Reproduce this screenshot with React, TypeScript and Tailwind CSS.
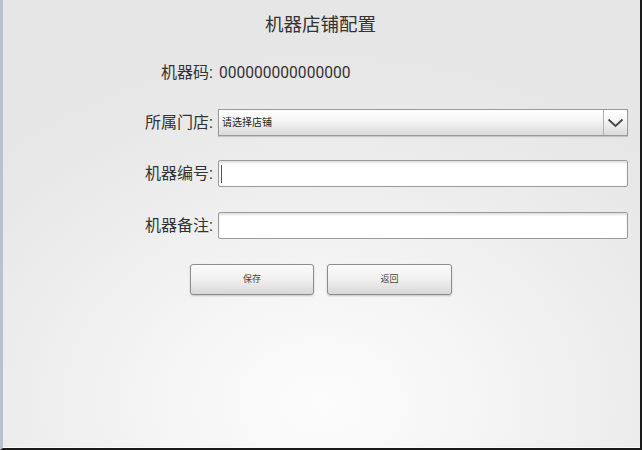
import React from "react";

const font = { fontFamily: 'Roboto, "Noto Sans CJK SC", sans-serif' };

function Label({ children }: { children: React.ReactNode }) {
  return (
    <div className="w-[214px] shrink-0 text-right text-[16px] leading-6 text-[#333] pr-[1px]">{children}</div>
  );
}

export default function App() {
  return (
    <div
      style={font}
      className="w-[642px] h-[450px] overflow-hidden flex border-l-[3px] border-l-[#bcc0cc] border-r-2 border-r-[#1a1a1a] border-b-2 border-b-[#1a1a1a] bg-[radial-gradient(ellipse_72%_78%_at_50%_90%,#fcfcfc_0%,#f5f5f5_35%,#ececec_70%,#e6e6e6_100%)]"
    >
      <div className="flex-1 flex flex-col -ml-[3px] border-b border-b-[#fafafa]">
        <div className="mt-[13px] h-6 text-center text-[18.5px] leading-6 text-[#333] pl-[1px]">机器店铺配置</div>

        <div className="mt-6 h-6 flex items-center">
          <Label>机器码:</Label>
          <div className="ml-[5px] text-[15.6px] leading-6 text-[#333]">000000000000000</div>
        </div>

        <div className="mt-6 h-[27px] flex items-center">
          <Label>所属门店:</Label>
          <div className="ml-[4px] mr-[12px] flex-1 h-[27px] flex border border-[#9a9a9a] bg-[linear-gradient(to_bottom,#ffffff_0%,#f6f6f6_40%,#dadada_100%)] shadow-[0_1px_1px_rgba(0,0,0,0.15)]">
            <div className="flex-1 flex items-center pl-[3px] text-[10px] text-[#222]">请选择店铺</div>
            <div className="w-[24px] border-l border-[#b0b0b0] flex items-center justify-center">
              <svg width="17" height="10" viewBox="0 0 17 10">
                <path d="M1.5 1.5 L8.5 8 L15.5 1.5" fill="none" stroke="#444" strokeWidth="1.8" />
              </svg>
            </div>
          </div>
        </div>

        <div className="mt-6 h-[27px] flex items-center">
          <Label>机器编号:</Label>
          <div className="ml-[4px] mr-[12px] flex-1 h-[27px] rounded-[2px] border border-[#9a9a9a] bg-white shadow-[inset_0_2px_2px_rgba(0,0,0,0.12)] flex items-center pl-[2px]">
            <div className="w-px h-[18px] bg-[#555]" />
          </div>
        </div>

        <div className="mt-[25px] h-[27px] flex items-center">
          <Label>机器备注:</Label>
          <div className="ml-[4px] mr-[12px] flex-1 h-[27px] rounded-[2px] border border-[#9a9a9a] bg-white shadow-[inset_0_2px_2px_rgba(0,0,0,0.12)]" />
        </div>

        <div className="mt-[25px] h-[31px] flex pl-[190px] gap-[13px]">
          <div className="w-[124px] h-[31px] rounded-[3px] border border-[#8c8c8c] bg-[linear-gradient(to_bottom,#fafafa_0%,#f2f2f2_45%,#d8d8d8_100%)] shadow-[0_1px_2px_rgba(0,0,0,0.2)] flex items-center justify-center text-[9px] text-[#444]">保存</div>
          <div className="w-[125px] h-[31px] rounded-[3px] border border-[#8c8c8c] bg-[linear-gradient(to_bottom,#fafafa_0%,#f2f2f2_45%,#d8d8d8_100%)] shadow-[0_1px_2px_rgba(0,0,0,0.2)] flex items-center justify-center text-[9px] text-[#444]">返回</div>
        </div>
      </div>
    </div>
  );
}
